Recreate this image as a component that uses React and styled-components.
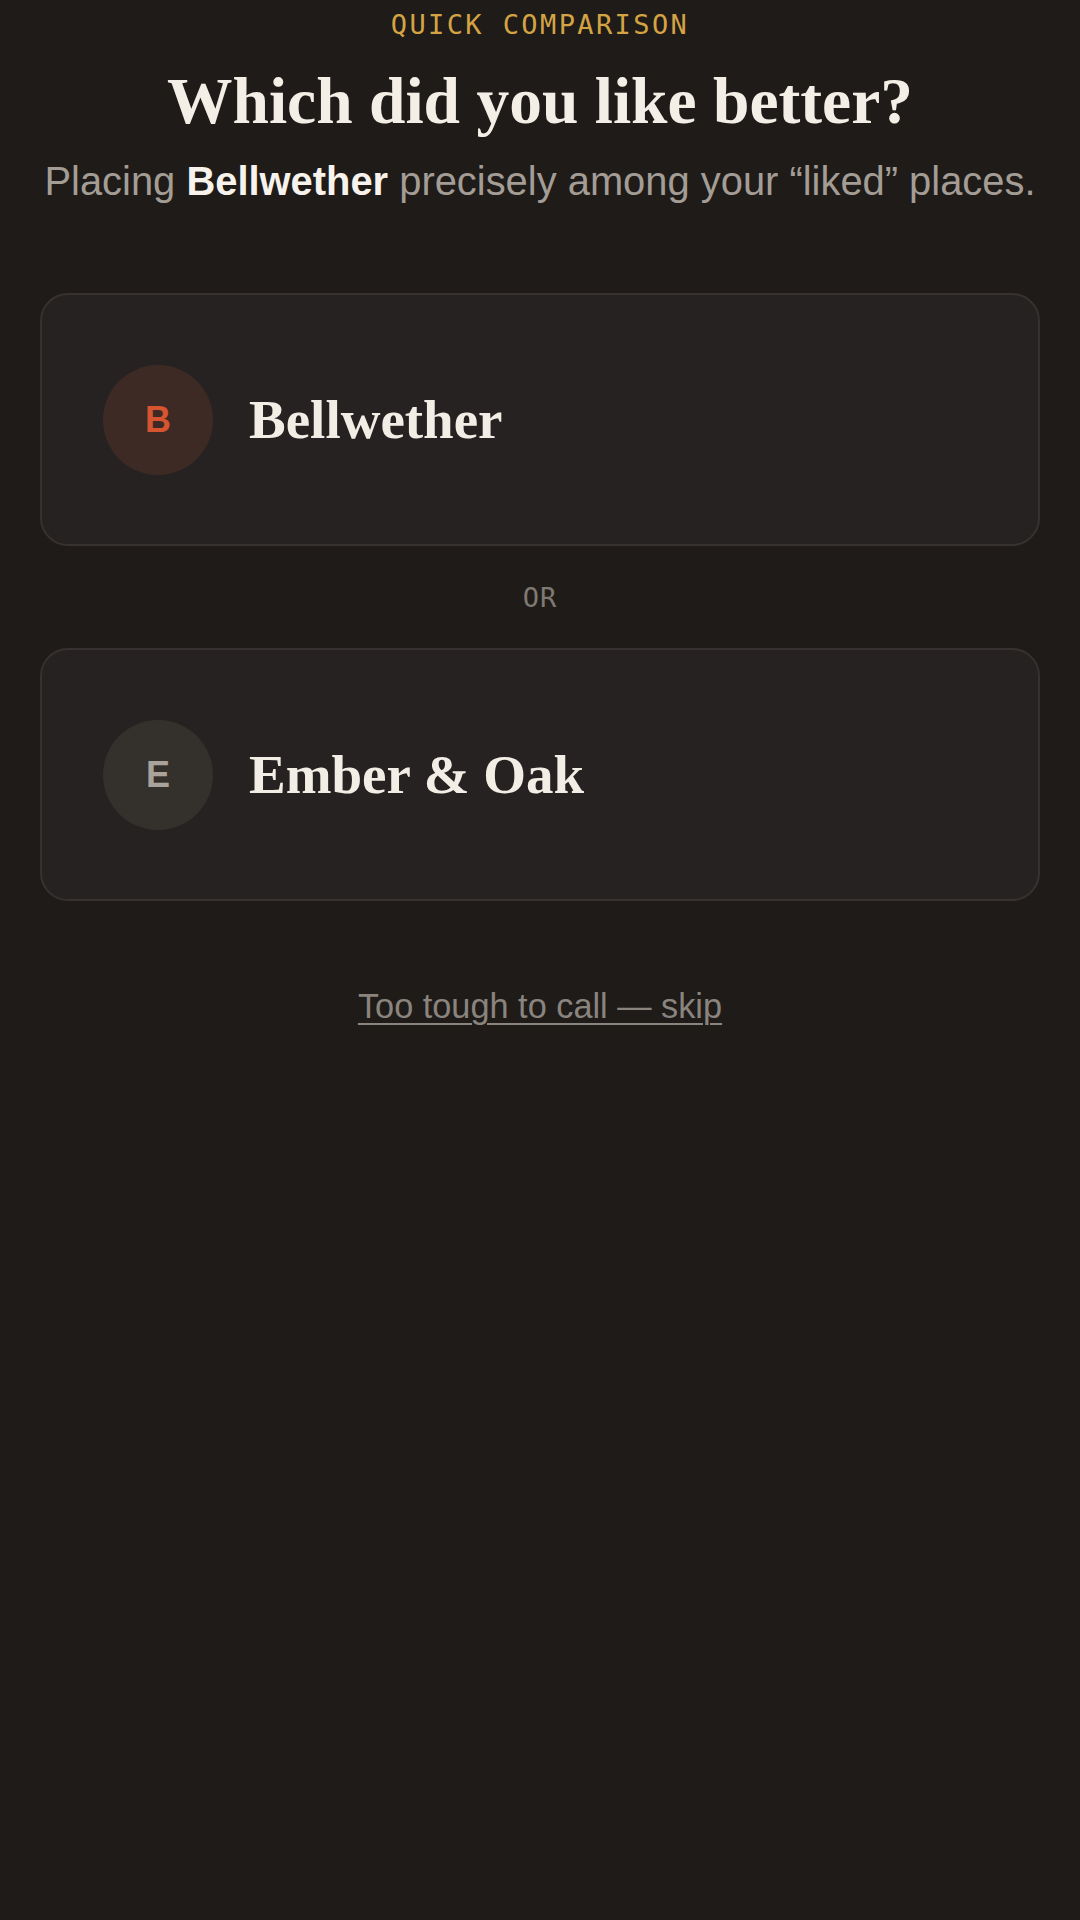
import React from "react";
import styled, { createGlobalStyle } from "styled-components";

const Global = createGlobalStyle`
  html, body {
    margin: 0;
    padding: 0;
    background: #1f1b18;
  }
  body {
    min-height: 1920px;
    font-family: "Liberation Sans", Arial, sans-serif;
  }
  * { box-sizing: border-box; }
`;

const Page = styled.main`
  width: 1080px;
  min-height: 1920px;
  background: #1f1b18;
  padding: 8px 40px 0;
  display: flex;
  flex-direction: column;
  align-items: center;
`;

const Eyebrow = styled.div`
  font-family: "DejaVu Sans Mono", "Liberation Mono", monospace;
  font-size: 27px;
  line-height: 34px;
  letter-spacing: 2.4px;
  color: #d4a444;
  text-transform: uppercase;
`;

const Title = styled.h1`
  margin: 23px 0 0;
  font-family: "Liberation Serif", "Times New Roman", serif;
  font-weight: 700;
  font-size: 65.5px;
  line-height: 72px;
  color: #f3eee6;
  text-align: center;
`;

const Subtitle = styled.p`
  margin: 20px 0 0;
  font-family: "Liberation Sans", Arial, sans-serif;
  font-size: 39.9px;
  line-height: 48px;
  color: #a39d96;
  text-align: center;
  white-space: nowrap;

  strong {
    color: #f7f3ec;
    font-weight: 700;
  }
`;

const Choices = styled.section`
  width: 100%;
  margin-top: 88px;
  display: flex;
  flex-direction: column;
`;

const Card = styled.button`
  width: 100%;
  height: 253px;
  display: flex;
  align-items: center;
  gap: 36px;
  padding: 0 0 0 61px;
  background: #262221;
  border: 2px solid #37322f;
  border-radius: 28px;
  cursor: pointer;
  text-align: left;
`;

const Avatar = styled.div`
  width: 110px;
  height: 110px;
  flex: none;
  border-radius: 50%;
  display: flex;
  align-items: center;
  justify-content: center;
  background: ${(p) => (p.$accent ? "#3e2a24" : "#34302c")};
  color: ${(p) => (p.$accent ? "#d65530" : "#a9a39c")};
  font-family: "Liberation Sans", Arial, sans-serif;
  font-weight: 700;
  font-size: 36px;
  line-height: 1;
`;

const Name = styled.span`
  font-family: "Liberation Serif", "Times New Roman", serif;
  font-weight: 700;
  font-size: 55px;
  line-height: 62px;
  color: #f2ede5;
`;

const Divider = styled.div`
  height: 102px;
  display: flex;
  align-items: center;
  justify-content: center;
  font-family: "DejaVu Sans Mono", "Liberation Mono", monospace;
  font-size: 27px;
  letter-spacing: 1px;
  color: #7f7974;
`;

const Skip = styled.a`
  margin-top: 85px;
  font-family: "Liberation Sans", Arial, sans-serif;
  font-size: 34.3px;
  line-height: 40px;
  color: #8a847e;
  text-decoration: underline;
  text-decoration-thickness: 2px;
  text-underline-offset: 5px;
  cursor: pointer;
`;

const options = [
  { initial: "B", name: "Bellwether", accent: true },
  { initial: "E", name: "Ember & Oak", accent: false },
];

function Choice({ initial, name, accent }) {
  return (
    <Card type="button">
      <Avatar $accent={accent}>{initial}</Avatar>
      <Name>{name}</Name>
    </Card>
  );
}

export default function App() {
  return (
    <>
      <Global />
      <Page>
        <Eyebrow>Quick Comparison</Eyebrow>
        <Title>Which did you like better?</Title>
        <Subtitle>
          Placing <strong>Bellwether</strong> precisely among your “liked” places.
        </Subtitle>
        <Choices>
          <Choice {...options[0]} />
          <Divider>OR</Divider>
          <Choice {...options[1]} />
        </Choices>
        <Skip>Too tough to call — skip</Skip>
      </Page>
    </>
  );
}
